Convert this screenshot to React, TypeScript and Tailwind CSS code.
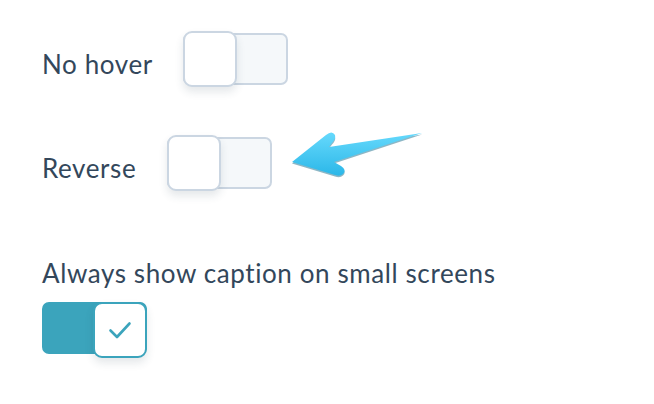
import React from 'react';

const Toggle: React.FC<{ on?: boolean }> = ({ on = false }) => {
  return (
    <div className="relative w-[105px] h-[56px] shrink-0">
      <div
        className={
          on
            ? 'mt-[2px] h-[52px] w-full rounded-[7px] border-2 border-[#3ba4bc] bg-[#3ba4bc]'
            : 'mt-[2px] h-[52px] w-full rounded-[7px] border-2 border-[#cbd6e2] bg-[#f5f8fa]'
        }
      />
      <div
        className={
          'absolute top-0 w-[54px] h-[56px] rounded-[9px] border-2 bg-white shadow-[0_5px_8px_rgba(45,62,80,0.12)] flex items-center justify-center ' +
          (on ? 'right-0 border-[#3ba4bc]' : 'left-0 border-[#cbd6e2]')
        }
      >
        {on && (
          <svg width="24" height="18" viewBox="0 0 24 18" fill="none">
            <path d="M2.5 9.5 L9 16 L21.5 2.5" stroke="#3ba4bc" strokeWidth="2.6" strokeLinecap="round" strokeLinejoin="round" />
          </svg>
        )}
      </div>
    </div>
  );
};

const Arrow = () => (
  <svg width="140" height="56" viewBox="0 0 140 56" className="absolute left-[288px] top-[126px]">
    <defs>
      <linearGradient id="arrowFill" x1="0" y1="0" x2="0" y2="1">
        <stop offset="0" stopColor="#66d9fc" />
        <stop offset="1" stopColor="#2bb7e8" />
      </linearGradient>
    </defs>
    <path
      d="M4 36 L38 9 Q44 4 47 9 Q48 13 44 17 L41 21 L134 7 L46 36 L53 40 Q59 44 55 48 Q52 51 47 49 Z"
      fill="#1b6f8e"
      opacity="0.5"
      transform="translate(0 1.5)"
    />
    <path
      d="M4 36 L38 9 Q44 4 47 9 Q48 13 44 17 L41 21 L134 7 L46 36 L53 40 Q59 44 55 48 Q52 51 47 49 Z"
      fill="url(#arrowFill)"
    />
  </svg>
);

export default function App() {
  return (
    <div
      className="relative w-[654px] h-[404px] bg-white pl-[42px] pt-[31px] text-[#33475b] text-[26px] leading-[32px] tracking-[0.6px]"
      style={{ fontFamily: 'Lato, "Noto Sans", sans-serif' }}
    >
      <div className="flex items-center gap-[30px]">
        <span className="pt-[10px]">No hover</span>
        <Toggle />
      </div>
      <div className="mt-[48px] flex items-center gap-[31px]">
        <span className="pt-[10px]">Reverse</span>
        <Toggle />
      </div>
      <div className="mt-[66px]">Always show caption on small screens</div>
      <div className="mt-[13px]">
        <Toggle on />
      </div>
      <Arrow />
    </div>
  );
}
